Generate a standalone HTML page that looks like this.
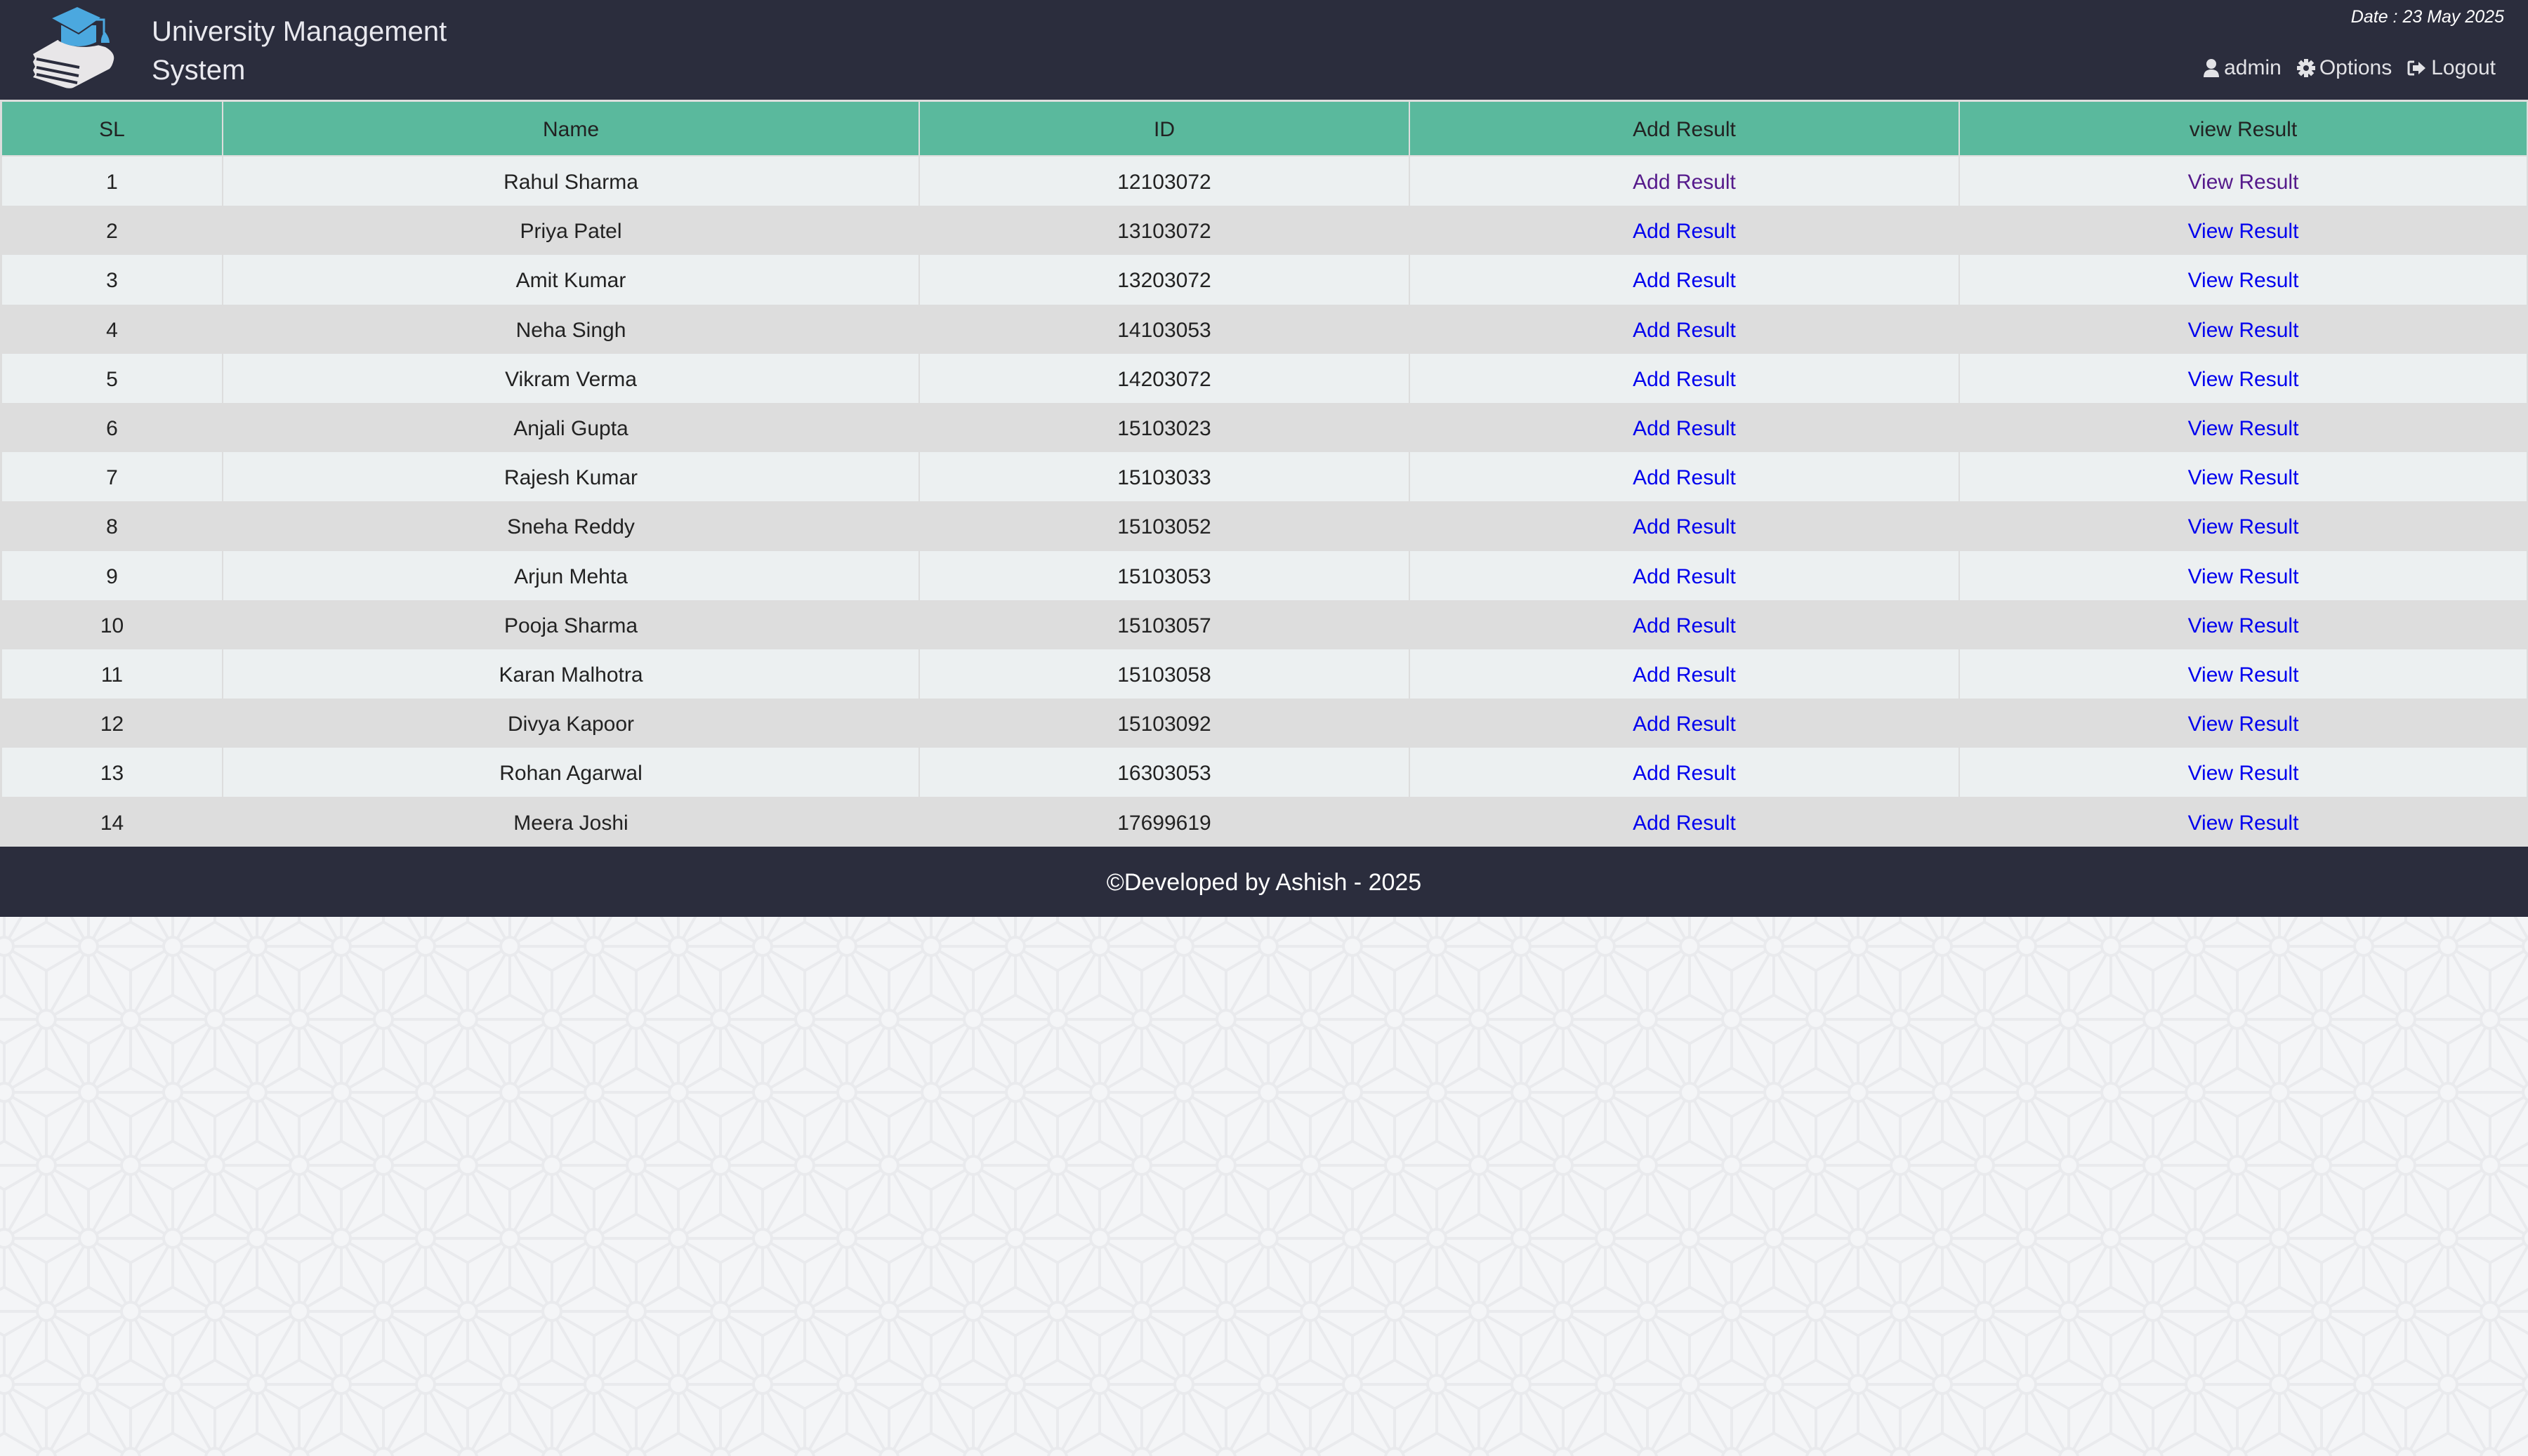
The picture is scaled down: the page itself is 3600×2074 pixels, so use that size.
<!DOCTYPE html>
<html><head><meta charset="utf-8"><style>
*{margin:0;padding:0;box-sizing:border-box}
html,body{width:3600px;height:2074px;overflow:hidden;background:#f4f5f7;font-family:"Liberation Sans",sans-serif}
#bg{position:absolute;left:0;top:0}
.hdr{position:absolute;left:0;top:0;width:3600px;height:142px;background:#2b2d3d}
.title{position:absolute;left:216px;top:18px;color:#e9e9ef;font-size:40px;line-height:55px}
.date{position:absolute;right:34px;top:10px;color:#fff;font-size:25px;font-style:italic}
.menu{position:absolute;right:46px;top:80px;color:#e2e2e6;font-size:30px;display:flex;gap:22px;align-items:center}
.menu span{display:flex;align-items:center;gap:6px}
.tbl{position:absolute;left:0;top:142px;width:3600px;background:#dddddd;padding:3px 2px 0 3px}
.row{display:grid;grid-template-columns:313px 990px 696px 781px 807px;column-gap:2px;height:70.2px}
.row div{display:flex;align-items:center;justify-content:center;font-size:30px;color:#222;padding-top:4px}
.row.h{height:76px;margin-bottom:2px}
.row.h div{background:#5ab99d;color:#222}
.row.o div{background:#ecf0f1}
.row.e div{background:#dddddd}
a{color:#0000ee;text-decoration:none}
a.v{color:#551a8b}
.ftr{position:absolute;left:0;top:1206px;width:3600px;height:100px;background:#2b2d3d;color:#fff;font-size:34px;display:flex;align-items:center;justify-content:center;padding-top:2px}
</style></head><body>
<svg id="bg" width="3600" height="2074">
<defs><pattern id="p" patternUnits="userSpaceOnUse" x="6" y="100" width="120" height="208">
<g stroke="#e9eaed" stroke-width="4" fill="none">
<path d="M0 0H120M0 104H120M0 208H120M0 0L120 208M120 0L0 208"/>
<path d="M60 34.7L0 0M60 34.7L120 0M60 34.7L60 104"/>
<path d="M0 69.3L0 0M0 69.3L60 104M0 69.3L-60 104"/>
<path d="M120 69.3L120 0M120 69.3L60 104M120 69.3L180 104"/>
<path d="M0 138.7L-60 104M0 138.7L60 104M0 138.7L0 208"/>
<path d="M120 138.7L180 104M120 138.7L60 104M120 138.7L120 208"/>
<path d="M60 173.3L60 104M60 173.3L0 208M60 173.3L120 208"/>
</g>
<g stroke="#e9eaed" stroke-width="4" fill="#f4f5f7">
<circle cx="0" cy="0" r="13"/><circle cx="120" cy="0" r="13"/><circle cx="60" cy="104" r="13"/><circle cx="0" cy="208" r="13"/><circle cx="120" cy="208" r="13"/>
</g></pattern></defs>
<rect x="0" y="1306" width="3600" height="768" fill="url(#p)"/>
</svg>
<div class="hdr">
<svg style="position:absolute;left:0;top:0" width="200" height="142">
<path d="M47 77L82 57Q120 58 150 67Q164 75 162 85Q160 94 156 98L104 125Q98 127 90 124L47 110L50 106L47 100L50 95L47 88L50 83Z" fill="#e8e6e8"/>
<path d="M52 84L113 96M52 96L112 108M52 106L110 118" stroke="#2b2d3d" stroke-width="4"/>
<path d="M83 58Q110 72 142 64L140 60Q110 66 86 54Z" fill="#2b2d3d"/>
<path d="M87 36L87 60Q112 72 137 60L137 36Z" fill="#4ba8df"/>
<path d="M72 26L110 9L145 25L112 48Z" fill="#4ba8df" stroke="#2b2d3d" stroke-width="2"/>
<path d="M118 28H148V48" stroke="#4ba8df" stroke-width="3" fill="none"/>
<path d="M148 46Q143 54 144 61H156Q156 54 150 46Z" fill="#4ba8df"/>
</svg>
<div class="title">University Management<br>System</div>
<div class="date">Date : 23 May 2025</div>
<div class="menu">
<span><svg width="24" height="28" viewBox="0 0 24 28"><circle cx="12" cy="8" r="7" fill="#e2e2e6"/><path d="M1 27Q1 16 12 16Q23 16 23 27Z" fill="#e2e2e6"/></svg>admin</span>
<span><svg width="26" height="26" viewBox="-13 -13 26 26"><g fill="#e2e2e6"><circle r="9"/><rect x="-3" y="-13" width="6" height="26"/><rect x="-3" y="-13" width="6" height="26" transform="rotate(45)"/><rect x="-3" y="-13" width="6" height="26" transform="rotate(90)"/><rect x="-3" y="-13" width="6" height="26" transform="rotate(135)"/></g><circle r="4" fill="#2b2d3d"/></svg>Options</span>
<span><svg width="28" height="24" viewBox="0 0 28 24"><path d="M10 3H4Q2 3 2 5V19Q2 21 4 21H10" stroke="#e2e2e6" stroke-width="3" fill="none"/><path d="M8 8H16V3L26 12L16 21V16H8Z" fill="#e2e2e6"/></svg>Logout</span>
</div>
</div>
<div class="tbl">
<div class="row h"><div>SL</div><div>Name</div><div>ID</div><div>Add Result</div><div>view Result</div></div>
<div class="row o"><div>1</div><div>Rahul Sharma</div><div>12103072</div><div><a class="v">Add Result</a></div><div><a class="v">View Result</a></div></div>
<div class="row e"><div>2</div><div>Priya Patel</div><div>13103072</div><div><a>Add Result</a></div><div><a>View Result</a></div></div>
<div class="row o"><div>3</div><div>Amit Kumar</div><div>13203072</div><div><a>Add Result</a></div><div><a>View Result</a></div></div>
<div class="row e"><div>4</div><div>Neha Singh</div><div>14103053</div><div><a>Add Result</a></div><div><a>View Result</a></div></div>
<div class="row o"><div>5</div><div>Vikram Verma</div><div>14203072</div><div><a>Add Result</a></div><div><a>View Result</a></div></div>
<div class="row e"><div>6</div><div>Anjali Gupta</div><div>15103023</div><div><a>Add Result</a></div><div><a>View Result</a></div></div>
<div class="row o"><div>7</div><div>Rajesh Kumar</div><div>15103033</div><div><a>Add Result</a></div><div><a>View Result</a></div></div>
<div class="row e"><div>8</div><div>Sneha Reddy</div><div>15103052</div><div><a>Add Result</a></div><div><a>View Result</a></div></div>
<div class="row o"><div>9</div><div>Arjun Mehta</div><div>15103053</div><div><a>Add Result</a></div><div><a>View Result</a></div></div>
<div class="row e"><div>10</div><div>Pooja Sharma</div><div>15103057</div><div><a>Add Result</a></div><div><a>View Result</a></div></div>
<div class="row o"><div>11</div><div>Karan Malhotra</div><div>15103058</div><div><a>Add Result</a></div><div><a>View Result</a></div></div>
<div class="row e"><div>12</div><div>Divya Kapoor</div><div>15103092</div><div><a>Add Result</a></div><div><a>View Result</a></div></div>
<div class="row o"><div>13</div><div>Rohan Agarwal</div><div>16303053</div><div><a>Add Result</a></div><div><a>View Result</a></div></div>
<div class="row e"><div>14</div><div>Meera Joshi</div><div>17699619</div><div><a>Add Result</a></div><div><a>View Result</a></div></div>
</div>
<div class="ftr">©Developed by Ashish - 2025</div>
</body></html>
